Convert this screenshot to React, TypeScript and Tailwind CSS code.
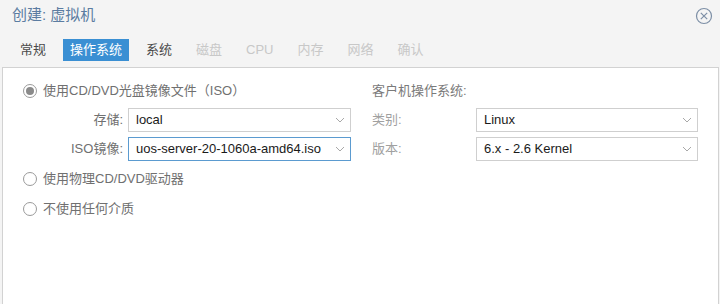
const font = { fontFamily: '"Liberation Sans", "Noto Sans CJK SC", sans-serif' };

const tabs = [
  { label: "常规", state: "normal" },
  { label: "操作系统", state: "active" },
  { label: "系统", state: "normal" },
  { label: "磁盘", state: "disabled" },
  { label: "CPU", state: "disabled" },
  { label: "内存", state: "disabled" },
  { label: "网络", state: "disabled" },
  { label: "确认", state: "disabled" },
];

function Chevron() {
  return (
    <svg width="10" height="6" viewBox="0 0 10 6" className="shrink-0">
      <path d="M1 1 L5 5 L9 1" fill="none" stroke="#a8a8a8" strokeWidth="1" />
    </svg>
  );
}

function Radio({ checked }: { checked?: boolean }) {
  return (
    <span className="flex h-[14px] w-[14px] shrink-0 items-center justify-center rounded-full border border-[#9a9a9a] bg-white">
      {checked && <span className="h-[8px] w-[8px] rounded-full bg-[#8a8a8a]" />}
    </span>
  );
}

function Select({ value, focused }: { value: string; focused?: boolean }) {
  return (
    <div
      className={`flex h-[24px] flex-1 items-center justify-between border bg-white pl-[7px] pr-[5px] text-[13px] text-[#1a1a1a] ${
        focused ? "border-[#5b9bd0]" : "border-[#cfcfcf]"
      }`}
    >
      <span>{value}</span>
      <Chevron />
    </div>
  );
}

function RadioRow({ label, checked }: { label: string; checked?: boolean }) {
  return (
    <div className="flex h-[22px] items-center gap-[6px] text-[13px] text-[#707070]">
      <Radio checked={checked} />
      <span>{label}</span>
    </div>
  );
}

export default function App() {
  return (
    <div className="flex h-[304px] w-[720px] flex-col overflow-hidden bg-[#f4f4f4]" style={font}>
      <header className="flex h-[30px] items-center justify-between pl-[12px] pr-[7px] pt-[1px]">
        <span className="text-[15px] text-[#5b7ca1]">创建: 虚拟机</span>
        <svg width="18" height="18" viewBox="0 0 18 18">
          <circle cx="9" cy="9" r="7.5" fill="none" stroke="#7d8fa6" strokeWidth="1.2" />
          <path d="M5.8 5.8 L12.2 12.2 M12.2 5.8 L5.8 12.2" stroke="#7d8fa6" strokeWidth="1.2" />
        </svg>
      </header>

      <nav className="mt-[9px] flex h-[22px] gap-[10px] pl-[13px] text-[13px]">
        {tabs.map((t) => (
          <span
            key={t.label}
            className={`flex items-center px-[7px] ${
              t.state === "active"
                ? "bg-[#3a8fd3] text-white"
                : t.state === "disabled"
                  ? "text-[#c8c8c8]"
                  : "text-[#4a4a4a]"
            }`}
          >
            {t.label}
          </span>
        ))}
      </nav>

      <main className="ml-[2px] mr-[1px] mt-[6px] flex flex-1 border-l border-r border-t border-[#d2d2d2] bg-white pt-[12px]">
        <section className="flex w-[348px] flex-col pl-[20px]">
          <RadioRow label="使用CD/DVD光盘镜像文件（ISO）" checked />
          <div className="mt-[6px] flex flex-col gap-[5px]">
            <div className="flex items-center">
              <span className="w-[105px] pr-[5px] text-right text-[13px] text-[#707070]">存储:</span>
              <Select value="local" />
            </div>
            <div className="flex items-center">
              <span className="w-[105px] pr-[5px] text-right text-[13px] text-[#707070]">ISO镜像:</span>
              <Select value="uos-server-20-1060a-amd64.iso" focused />
            </div>
          </div>
          <div className="mt-[7px] flex flex-col gap-[8px]">
            <RadioRow label="使用物理CD/DVD驱动器" />
            <RadioRow label="不使用任何介质" />
          </div>
        </section>

        <section className="ml-[21px] flex w-[326px] flex-col">
          <div className="flex h-[22px] items-center text-[13px] text-[#7a7a7a]">客户机操作系统:</div>
          <div className="mt-[6px] flex flex-col gap-[5px]">
            <div className="flex items-center">
              <span className="w-[104px] text-[13px] text-[#a0a0a0]">类别:</span>
              <Select value="Linux" />
            </div>
            <div className="flex items-center">
              <span className="w-[104px] text-[13px] text-[#a0a0a0]">版本:</span>
              <Select value="6.x - 2.6 Kernel" />
            </div>
          </div>
        </section>
      </main>
    </div>
  );
}
